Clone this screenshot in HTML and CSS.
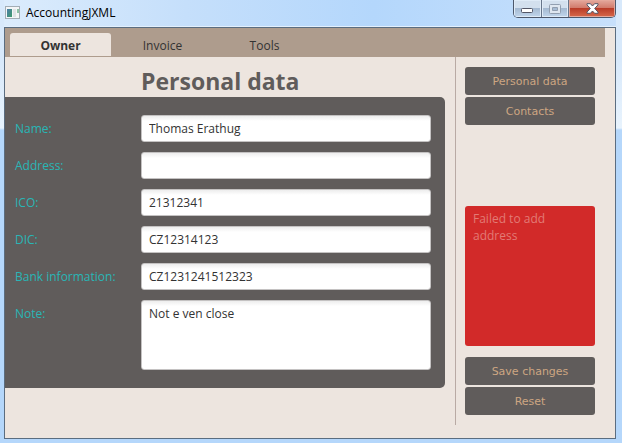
FILE: index.html
```html
<!DOCTYPE html>
<html lang="en">
<head>
<meta charset="utf-8">
<title>AccountingJXML</title>
<link rel="stylesheet" href="styles.css">
</head>
<body>
<div class="window">
  <header class="titlebar">
    <svg class="app-icon" width="15" height="13" viewBox="0 0 15 13" aria-hidden="true">
      <defs>
        <linearGradient id="screen" x1="0" y1="0" x2="1" y2="1">
          <stop offset="0" stop-color="#4c7ea8"/>
          <stop offset="1" stop-color="#3f9a6c"/>
        </linearGradient>
      </defs>
      <rect x=".5" y=".5" width="14" height="12" fill="#f4f6f7" stroke="#a3adb5"/>
      <rect x="2" y="3" width="5" height="8" fill="url(#screen)"/>
      <rect x="8" y="3" width="3" height="8" fill="#dfe3e5"/>
      <rect x="12" y="3" width="2" height="4" fill="#8fc3a6"/>
    </svg>
    <h1 class="app-name">AccountingJXML</h1>
    <div class="controls">
      <button class="control" type="button" aria-label="Minimize">
        <svg width="13" height="7" viewBox="0 0 13 7"><rect x=".5" y="1.5" width="11" height="4" rx="1" fill="#fff" stroke="#535666"/></svg>
      </button>
      <button class="control" type="button" aria-label="Maximize" disabled>
        <svg width="12" height="10" viewBox="0 0 12 10"><path fill="#dfe7f0" fill-rule="evenodd" stroke="#929fb0" d="M1.5.5h9q1 0 1 1v7q0 1-1 1h-9q-1 0-1-1v-7q0-1 1-1zM3.500 3.500v3h5v-3z"/></svg>
      </button>
      <button class="control close" type="button" aria-label="Close">
        <svg width="13" height="11" viewBox="0 0 13 11"><path fill="#fff" stroke="#535666" stroke-linejoin="round" d="M1 .7h3.400L6.500 3 8.600.7H12v1.200L8.700 5.500 12 9.100v1.200H8.600L6.500 8 4.400 10.300H1V9.100l3.300-3.600L1 1.900z"/></svg>
      </button>
    </div>
  </header>

  <div class="client">
    <nav class="tabs" role="tablist">
      <button class="tab selected" type="button" role="tab" aria-selected="true">Owner</button>
      <button class="tab" type="button" role="tab" aria-selected="false">Invoice</button>
      <button class="tab" type="button" role="tab" aria-selected="false">Tools</button>
    </nav>
    <div class="content">
      <main class="main">
        <h2 class="heading">Personal data</h2>
        <form class="panel" id="owner">
          <label class="label" for="name">Name:</label>
          <input class="field" id="name" type="text" value="Thomas Erathug">
          <label class="label" for="address">Address:</label>
          <input class="field" id="address" type="text">
          <label class="label" for="ico">ICO:</label>
          <input class="field" id="ico" type="text" value="21312341">
          <label class="label" for="dic">DIC:</label>
          <input class="field" id="dic" type="text" value="CZ12314123">
          <label class="label" for="bank">Bank information:</label>
          <input class="field" id="bank" type="text" value="CZ1231241512323">
          <label class="label" for="note">Note:</label>
          <textarea class="field note" id="note">Not e ven close</textarea>
        </form>
      </main>
      <aside class="sidebar">
        <div class="group">
          <button class="button" type="button">Personal data</button>
          <button class="button" type="button">Contacts</button>
        </div>
        <div class="group">
          <p class="alert" role="alert">Failed to add address</p>
          <button class="button" type="button">Save changes</button>
          <button class="button" type="button">Reset</button>
        </div>
      </aside>
    </div>
  </div>
</div>
</body>
</html>
```

FILE: styles.css
```css
* {
  box-sizing: border-box;
}

body {
  margin: 0;
  color: #333;
  font: 12px/17px "Open Sans", "Noto Sans", sans-serif;
}

button,
input,
textarea {
  font: inherit;
  color: inherit;
}

.window {
  display: flex;
  flex-direction: column;
  min-height: 100vh;
  padding: 0 6px 4px 4px;
  background:
    linear-gradient(#d8e9fb 60px, #e8f3fd 128px, #b5d7fb 130px) left / 4px 100% no-repeat,
    linear-gradient(#d8e9fb 60px, #e8f3fd 128px, #b5d7fb 130px) right / 6px 100% no-repeat,
    linear-gradient(to right, #dcecfc, #c5dffb 30%, #b4d7fc 60%, #c8e0fb) top / 100% 27px no-repeat,
    #b5d7fb;
}

.titlebar {
  display: flex;
  align-items: center;
  height: 27px;
  padding: 0 0 1px 1px;
  border-bottom: 1px solid #e3f0fd;
}

.app-name {
  margin: 0 auto 0 6px;
  color: #000;
  font-size: 12px;
  font-weight: 400;
}

.controls {
  display: flex;
  align-self: flex-start;
  height: 18px;
  border: 1px solid #4d586b;
  border-top: 0;
  border-radius: 0 0 5px 5px;
  overflow: hidden;
}

.control {
  display: flex;
  align-items: center;
  justify-content: center;
  width: 27px;
  padding: 0;
  border: 0;
  border-right: 1px solid #66758a;
  background: linear-gradient(#d3e0ee 8px, #a3b8d0 8px, #c1d6ec);
  box-shadow: inset 0 0 0 1px #dfebf7;
}

.control:first-child {
  width: 28px;
  padding-top: 4px;
}

.close {
  width: 46px;
  border-right: 0;
  background: linear-gradient(#e4a99d, #d17a6a 8px, #b83a26 8px, #d7694b);
  box-shadow: inset 0 0 0 1px #e5a99c;
}

.client {
  display: flex;
  flex: 1;
  flex-direction: column;
  border: 1px solid #5b6d80;
  background: #ede5df;
}

.tabs {
  display: flex;
  gap: 1px;
  margin-right: 10px;
  padding: 5px 5px 1px;
  background: #ae9c8d;
}

.tab {
  width: 101px;
  height: 23px;
  padding: 2px 0 0;
  border: 0;
  border-radius: 3px 3px 0 0;
  background: none;
}

.selected {
  background: #ede5df;
  font-weight: 700;
}

.content {
  display: flex;
  flex: 1;
  padding-bottom: 13px;
}

.main {
  flex: 1;
  padding-right: 10px;
  border-right: 1px solid #b9aaa4;
}

.heading {
  margin: 0;
  padding: 8px 0 0 136px;
  color: #605c5b;
  font-size: 23px;
  line-height: 32px;
}

.panel {
  display: grid;
  grid-template-columns: 116px 1fr;
  gap: 10px;
  padding: 18px 14px 18px 10px;
  border-radius: 0 5px 5px 0;
  background: #605c5b;
}

.label {
  padding-top: 5px;
  color: #29b6b6;
}

.field {
  width: 100%;
  height: 27px;
  padding: 4px 7px;
  border: 1px solid #c4c2c2;
  border-radius: 3px;
  background: linear-gradient(#ededed, #fff 5px);
}

.note {
  display: block;
  height: 70px;
  resize: none;
}

.sidebar {
  display: flex;
  flex-direction: column;
  justify-content: space-between;
  width: 159px;
  padding: 10px 20px 10px 9px;
}

.group {
  display: flex;
  flex-direction: column;
  gap: 2px;
}

.button {
  height: 28px;
  padding: 0;
  border: 0;
  border-radius: 3px;
  background: #605c5b;
  color: #cda682;
  font: 11px/17px "DejaVu Sans", sans-serif;
}

.alert {
  height: 140px;
  margin: 0 0 9px;
  padding: 4px 8px;
  border-radius: 3px;
  background: #d22a29;
  color: #e27a75;
}
```
